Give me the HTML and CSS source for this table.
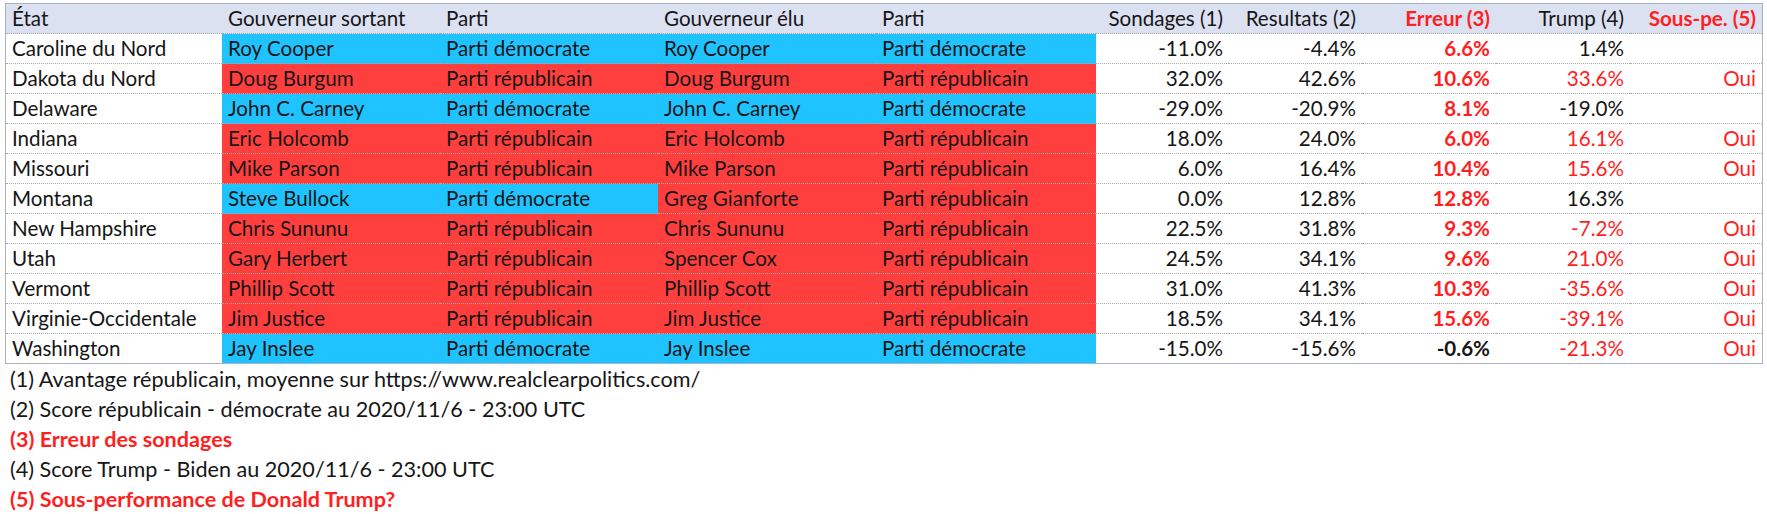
FILE: index.html
```html
<!DOCTYPE html>
<html lang="fr">
<head>
<meta charset="utf-8">
<title>Gouverneurs 2020</title>
<link rel="stylesheet" href="styles.css">
</head>
<body>
<div class="page">
<table class="grid">
  <colgroup>
    <col class="c-wide c-first"><col class="c-wide"><col class="c-wide"><col class="c-wide"><col class="c-wide5">
    <col class="c-num"><col class="c-num"><col class="c-num2"><col class="c-num2"><col class="c-last">
  </colgroup>
  <thead>
    <tr>
      <th class="l">État</th>
      <th class="l">Gouverneur sortant</th>
      <th class="l">Parti</th>
      <th class="l">Gouverneur élu</th>
      <th class="l">Parti</th>
      <th class="r">Sondages (1)</th>
      <th class="r">Resultats (2)</th>
      <th class="r red b">Erreur (3)</th>
      <th class="r">Trump (4)</th>
      <th class="r red b">Sous-pe. (5)</th>
    </tr>
  </thead>
  <tbody>
    <tr><td>Caroline du Nord</td><td class="dem">Roy Cooper</td><td class="dem">Parti démocrate</td><td class="dem">Roy Cooper</td><td class="dem">Parti démocrate</td><td class="r">-11.0%</td><td class="r">-4.4%</td><td class="r red b">6.6%</td><td class="r">1.4%</td><td class="r red"></td></tr>
    <tr><td>Dakota du Nord</td><td class="rep">Doug Burgum</td><td class="rep">Parti républicain</td><td class="rep">Doug Burgum</td><td class="rep">Parti républicain</td><td class="r">32.0%</td><td class="r">42.6%</td><td class="r red b">10.6%</td><td class="r red">33.6%</td><td class="r red">Oui</td></tr>
    <tr><td>Delaware</td><td class="dem">John C. Carney</td><td class="dem">Parti démocrate</td><td class="dem">John C. Carney</td><td class="dem">Parti démocrate</td><td class="r">-29.0%</td><td class="r">-20.9%</td><td class="r red b">8.1%</td><td class="r">-19.0%</td><td class="r red"></td></tr>
    <tr><td>Indiana</td><td class="rep">Eric Holcomb</td><td class="rep">Parti républicain</td><td class="rep">Eric Holcomb</td><td class="rep">Parti républicain</td><td class="r">18.0%</td><td class="r">24.0%</td><td class="r red b">6.0%</td><td class="r red">16.1%</td><td class="r red">Oui</td></tr>
    <tr><td>Missouri</td><td class="rep">Mike Parson</td><td class="rep">Parti républicain</td><td class="rep">Mike Parson</td><td class="rep">Parti républicain</td><td class="r">6.0%</td><td class="r">16.4%</td><td class="r red b">10.4%</td><td class="r red">15.6%</td><td class="r red">Oui</td></tr>
    <tr><td>Montana</td><td class="dem">Steve Bullock</td><td class="dem">Parti démocrate</td><td class="rep">Greg Gianforte</td><td class="rep">Parti républicain</td><td class="r">0.0%</td><td class="r">12.8%</td><td class="r red b">12.8%</td><td class="r">16.3%</td><td class="r red"></td></tr>
    <tr><td>New Hampshire</td><td class="rep">Chris Sununu</td><td class="rep">Parti républicain</td><td class="rep">Chris Sununu</td><td class="rep">Parti républicain</td><td class="r">22.5%</td><td class="r">31.8%</td><td class="r red b">9.3%</td><td class="r red">-7.2%</td><td class="r red">Oui</td></tr>
    <tr><td>Utah</td><td class="rep">Gary Herbert</td><td class="rep">Parti républicain</td><td class="rep">Spencer Cox</td><td class="rep">Parti républicain</td><td class="r">24.5%</td><td class="r">34.1%</td><td class="r red b">9.6%</td><td class="r red">21.0%</td><td class="r red">Oui</td></tr>
    <tr><td>Vermont</td><td class="rep">Phillip Scott</td><td class="rep">Parti républicain</td><td class="rep">Phillip Scott</td><td class="rep">Parti républicain</td><td class="r">31.0%</td><td class="r">41.3%</td><td class="r red b">10.3%</td><td class="r red">-35.6%</td><td class="r red">Oui</td></tr>
    <tr><td>Virginie-Occidentale</td><td class="rep">Jim Justice</td><td class="rep">Parti républicain</td><td class="rep">Jim Justice</td><td class="rep">Parti républicain</td><td class="r">18.5%</td><td class="r">34.1%</td><td class="r red b">15.6%</td><td class="r red">-39.1%</td><td class="r red">Oui</td></tr>
    <tr class="last"><td>Washington</td><td class="dem">Jay Inslee</td><td class="dem">Parti démocrate</td><td class="dem">Jay Inslee</td><td class="dem">Parti démocrate</td><td class="r">-15.0%</td><td class="r">-15.6%</td><td class="r b">-0.6%</td><td class="r red">-21.3%</td><td class="r red">Oui</td></tr>
  </tbody>
</table>
<div class="notes">
  <p>(1) Avantage républicain, moyenne sur https://www.realclearpolitics.com/</p>
  <p>(2) Score républicain - démocrate au 2020/11/6 - 23:00 UTC</p>
  <p class="red b">(3) Erreur des sondages</p>
  <p>(4) Score Trump - Biden au 2020/11/6 - 23:00 UTC</p>
  <p class="red b">(5) Sous-performance de Donald Trump?</p>
</div>
</div>
</body>
</html>
```
FILE: styles.css
```css
html, body {
  margin: 0;
  padding: 0;
  background: #ffffff;
}
body {
  font-family: Lato, "Open Sans", "Liberation Sans", sans-serif;
  font-size: 20.6px;
  color: #161616;
}
.page {
  padding: 3px 0 0 5px;
}
.grid {
  table-layout: fixed;
  border-collapse: separate;
  border-spacing: 0;
  width: 1757px;
  border: 1px solid #a9b2c4;
}
.c-wide { width: 218px; }
.c-first { width: 216px; }
.c-wide5 { width: 220px; }
.c-num { width: 133px; }
.c-num2 { width: 134px; }
.c-last { width: 132px; }

.grid th,
.grid td {
  height: 29px;
  padding: 0 6px;
  line-height: 29px;
  white-space: nowrap;
  overflow: hidden;
  border-bottom: 1px dotted #a8a8a8;
  font-weight: normal;
  vertical-align: middle;
}
.grid thead th {
  background: #dce1f2;
}
.grid tr.last td {
  border-bottom: none;
}
.l { text-align: left; }
.r { text-align: right; }
.red { color: #ff1f1f; }
.b { font-weight: bold !important; }
.dem { background: #1ec3ff; }
.rep { background: #ff3e3e; }

.notes {
  padding: 0 0 0 5px;
  font-size: 21.6px;
}
.notes p {
  margin: 0;
  line-height: 30px;
}
```
